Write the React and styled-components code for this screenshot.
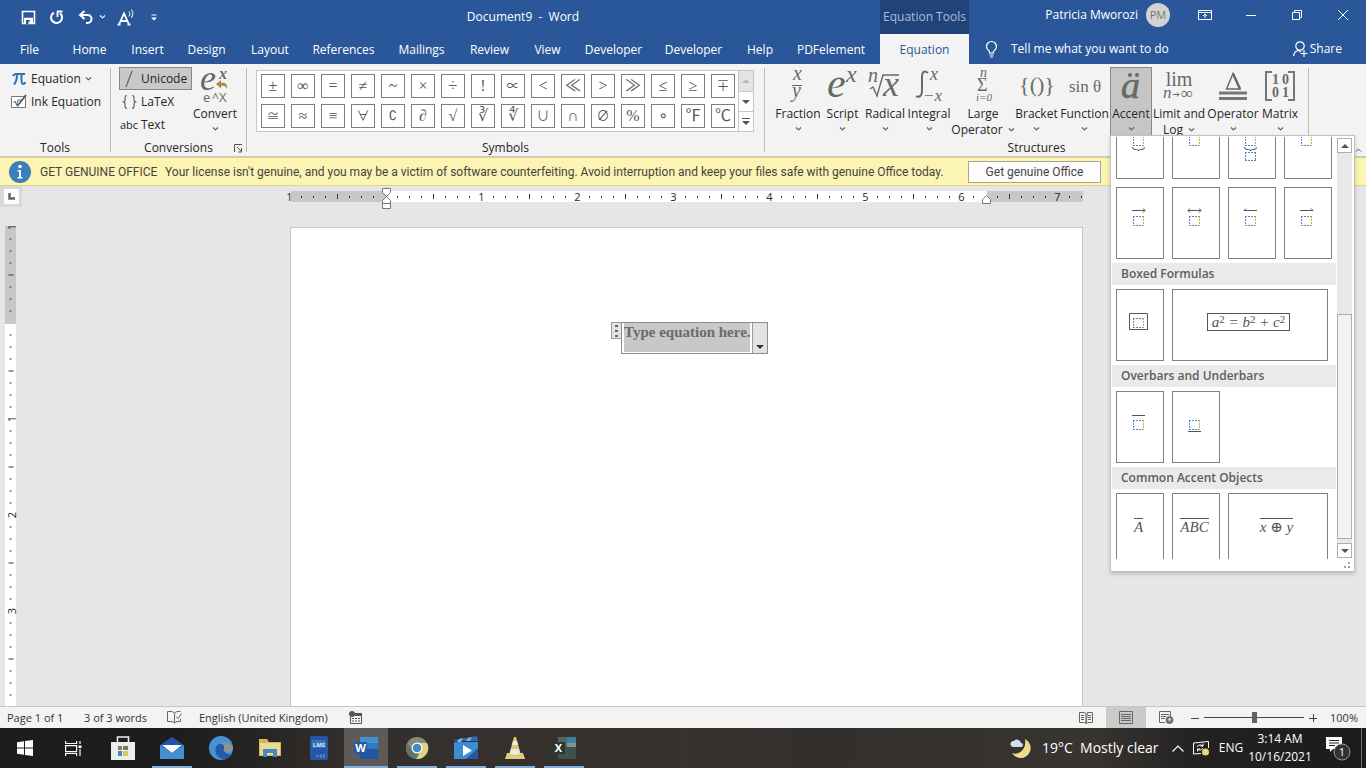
import React, { useState } from 'react'
import styled, { createGlobalStyle, css } from 'styled-components';

const GlobalStyle = createGlobalStyle`
  * { box-sizing: border-box; }
  body {
    margin: 0;
    overflow: hidden;
    font-family: "Open Sans", "Noto Sans", sans-serif;
    font-size: 12px;
    line-height: 16px;
    color: #262626;
  }
  button, input {
    font: inherit;
    color: inherit;
    background: none;
    border: 0;
    padding: 0;
    margin: 0;
  }
  svg { display: block; flex: none; overflow: visible; }
`

const MATH = '"Liberation Serif", "DejaVu Serif", serif';

const Window = styled.div`
  display: flex;
  flex-direction: column;
  height: 100vh;
`

/* ---------- title bar and tabs ---------- */

const TitleBar = styled.header`
  display: flex;
  height: 34px;
  flex: none;
  background: #2a579a;
  color: #fff;
`

const QuickAccess = styled.div`
  display: flex;
  align-items: center;
  width: 166px;
  padding-left: 21px;
`

const QuickButton = styled.button`
  display: flex;
  justify-content: center;
  width: ${p => p.$width || 28}px;
`

const DocTitle = styled.h1`
  flex: 1;
  margin: 0;
  font-size: 12px;
  font-weight: 400;
  line-height: 34px;
  text-align: center;
  white-space: pre;
`

const ContextTitle = styled.div`
  width: 89px;
  background: #204478;
  color: #a9bcd8;
  line-height: 33px;
  text-align: center;
  white-space: nowrap;
`

const TitleRight = styled.div`
  display: flex;
  align-items: center;
  justify-content: flex-end;
  width: 397px;
  padding-bottom: 4px;
`

const Avatar = styled.span`
  width: 24px;
  height: 24px;
  margin: 0 12px 0 8px;
  border-radius: 50%;
  background: #d2d2d2;
  color: #77787a;
  font-size: 11px;
  line-height: 24px;
  text-align: center;
`

const WindowButton = styled.button`
  display: flex;
  align-items: center;
  justify-content: center;
  width: 46px;
  height: 30px;
`

const TabBar = styled.nav`
  display: flex;
  height: 30px;
  flex: none;
  background: #2a579a;
  color: #fff;
`

const Tabs = styled.div`
  display: flex;
  flex: 1;
`

const Tab = styled.button`
  width: ${p => p.$width}px;
  height: 30px;
  padding-top: 2px;
  text-align: center;
  white-space: nowrap;
  ${p => p.$active && css`
    background: #f3f3f3;
    color: #2a579a;
  `}
`

const TabRight = styled.div`
  display: flex;
  align-items: center;
  justify-content: space-between;
  width: 397px;
  padding: 0 24px 0 16px;
`

const IconTextButton = styled.button`
  display: flex;
  align-items: center;
  gap: ${p => p.$gap}px;
  white-space: nowrap;
`

/* ---------- ribbon ---------- */

const Ribbon = styled.section`
  display: flex;
  height: 93px;
  flex: none;
  background: #f3f3f3;
  border-bottom: 1px solid #c8c8c8;
`

const Group = styled.div`
  display: flex;
  flex-direction: column;
  width: ${p => p.$width}px;
  padding-top: 3px;
`

const GroupBody = styled.div`
  display: flex;
  height: 72px;
  flex: none;
  padding-left: ${p => p.$left || 0}px;
`

const GroupLabel = styled.div`
  position: relative;
  padding-top: 1px;
  text-align: center;
`

const Launcher = styled.button`
  position: absolute;
  right: 3px;
  top: 5px;
`

const Separator = styled.div`
  width: 1px;
  margin: 4px 0;
  background: #c2bbb0;
`

const SmallColumn = styled.div`
  width: ${p => p.$width}px;
`

const SmallButton = styled.button`
  display: flex;
  align-items: center;
  gap: 4px;
  width: 100%;
  height: 23px;
  padding-left: 1px;
  white-space: nowrap;
  border: 1px solid ${p => (p.$active ? '#888' : 'transparent')};
  background: ${p => (p.$active ? '#c8c8c8' : 'none')};
`

const IconSlot = styled.span`
  display: flex;
  justify-content: center;
  width: 16px;
  font-size: 11px;
`

const BigWrap = styled.div`
  position: relative;
  width: ${p => p.$width}px;
`

const BigButton = styled.button`
  display: flex;
  flex-direction: column;
  align-items: center;
  width: 100%;
  height: 70px;
  border: 1px solid ${p => (p.$active ? '#8a8a8a' : 'transparent')};
  background: ${p => (p.$active ? '#c6c6c6' : 'none')};
`

const BigLabel = styled.span`
  display: flex;
  justify-content: center;
  align-items: center;
  gap: 5px;
  height: 16px;
  white-space: nowrap;
`

const Gallery = styled.div`
  display: flex;
  width: 498px;
  height: 62px;
  margin-top: 3px;
  border: 1px solid #c6c6c6;
  background: #fff;
`

const SymbolGrid = styled.div`
  display: grid;
  grid-template-columns: repeat(16, 24px);
  grid-auto-rows: 24px;
  gap: 6px;
  padding: 3px 0 0 4px;
  flex: 1;
`

const SymbolButton = styled.button`
  border: 1px solid #7d7d7d;
  background: #fff;
  color: #555a55;
  font-family: "Liberation Serif", "Noto Sans CJK JP", "DejaVu Sans", serif;
  font-size: ${p => (p.$wide ? 13 : 16)}px;
  line-height: 20px;
`

const GallerySpin = styled.div`
  display: grid;
  grid-template-rows: 20px 20px 20px;
  width: 15px;
  border-left: 1px solid #c6c6c6;
`

const SpinButton = styled.button`
  display: flex;
  align-items: center;
  justify-content: center;
  background: ${p => (p.disabled ? '#e4e4e4' : '#fff')};
  & + & { border-top: 1px solid #c6c6c6; }
`

const CollapseButton = styled.button`
  display: flex;
  align-items: flex-end;
  margin-left: auto;
  padding: 0 4px 4px 0;
`

/* ---------- accent menu ---------- */

const Menu = styled.div`
  position: absolute;
  z-index: 5;
  top: 100%;
  left: 0;
  margin-top: -4px;
  width: 245px;
  height: 437px;
  display: flex;
  flex-direction: column;
  border: 1px solid #c3c3c3;
  background: #fff;
  box-shadow: 0 2px 4px rgba(0, 0, 0, 0.2);
`

const MenuBody = styled.div`
  display: flex;
  height: 424px;
  padding: 1px 2px 0 1px;
`

const MenuList = styled.div`
  width: 225px;
  height: 422px;
  overflow: hidden;
`

const MenuRow = styled.div`
  display: flex;
  gap: 8px;
  padding: 4px;
  &:first-child { margin-top: -34px; }
`

const MenuHeading = styled.h2`
  width: 224px;
  margin: 0;
  padding-left: 9px;
  background: #eaeaea;
  color: #5a5f5b;
  font-size: 12px;
  font-weight: 600;
  line-height: 22px;
`

const MenuCell = styled.button`
  display: flex;
  align-items: center;
  justify-content: center;
  flex: none;
  width: ${p => p.$width || 48}px;
  height: 72px;
  border: 1px solid #7f7f7f;
  background: #fff;
  color: #55564c;
  font-family: ${MATH};
  font-style: italic;
  font-size: 15px;
`

const BoxedFormula = styled.span`
  height: 18px;
  padding: 0 4px;
  margin: 0 3px 6px 0;
  border: 1px solid #555;
  line-height: 17px;
  white-space: nowrap;
  sup {
    font-size: 11px;
    font-style: normal;
    line-height: 0;
    vertical-align: 4px;
  }
`

const Overlined = styled.span`
  border-top: 1px solid #555;
  line-height: 16px;
  margin: 0 3px 6px 0;
  white-space: nowrap;
`

const ScrollTrack = styled.div`
  display: flex;
  flex-direction: column;
  align-items: center;
  width: 15px;
  height: 420px;
  margin-top: 1px;
  background: #e8e8e8;
`

const ScrollButton = styled.button`
  display: flex;
  align-items: center;
  justify-content: center;
  width: 15px;
  height: 15px;
  border: 1px solid #b5ada5;
  background: #fff;
`

const ScrollThumb = styled.div`
  width: 15px;
  height: 225px;
  margin: auto 0 4px;
  border: 1px solid #b5ada5;
  background: #f2f2f2;
`

const MenuFooter = styled.div`
  display: flex;
  justify-content: flex-end;
  padding: 2px 4px 0 0;
`

/* ---------- licence bar ---------- */

const LicenseBar = styled.div`
  display: flex;
  align-items: center;
  height: 29px;
  flex: none;
  padding-left: 9px;
  background: #fcf4b2;
  border: solid #dfd389;
  border-width: 1px 0;
  color: #444;
  font-family: Roboto, sans-serif;
  white-space: nowrap;
`

const LicenseTitle = styled.strong`
  width: 125px;
  margin-left: 9px;
  font-weight: 400;
`

const LicenseText = styled.span`
  width: 803px;
`

const LicenseButton = styled.button`
  width: 133px;
  height: 22px;
  border: 1px solid #aaa394;
  background: #fdfdfd;
`

/* ---------- document ---------- */

const Workspace = styled.main`
  display: flex;
  flex: 1;
  min-height: 0;
  overflow: hidden;
  background: #e6e6e6;
`

const LeftColumn = styled.div`
  display: flex;
  flex-direction: column;
  width: 22px;
  flex: none;
`

const TabStop = styled.button`
  display: flex;
  align-items: center;
  justify-content: center;
  width: 22px;
  height: 21px;
  flex: none;
  border: 3px solid #dadada;
  border-left-width: 4px;
  background: #fdfdfd;
`

const VerticalRuler = styled.div`
  display: flex;
  flex: 1;
  min-height: 0;
  width: 11px;
  margin: 19px 0 0 5px;
  background: linear-gradient(#c8c8c8 98px, #fff 98px);
`

const HorizontalRuler = styled.div`
  position: relative;
  width: 792px;
  height: 11px;
  margin-top: 5px;
  background: linear-gradient(90deg, #c8c8c8 95px, #fff 95px 696px, #c8c8c8 696px);
`

const Ticks = styled.div`
  display: flex;
  flex-direction: ${p => (p.$vertical ? 'column' : 'row')};
  margin: ${p => (p.$vertical ? '-5px 0 0' : '0 0 0 -7px')};
`

const Tick = styled.span`
  display: flex;
  flex: none;
  align-items: center;
  justify-content: center;
  width: ${p => (p.$vertical ? 11 : 12)}px;
  height: ${p => (p.$vertical ? 12 : 11)}px;
  font-size: 11px;
  line-height: 11px;
  ${p => p.$vertical && 'transform: rotate(-90deg);'}
  ${p => p.$mark && css`
    &::before {
      content: "";
      width: 1px;
      height: ${p.$mark}px;
      background: #333;
    }
  `}
`

const Marker = styled.svg`
  position: absolute;
  top: ${p => p.$top}px;
  left: ${p => p.$left}px;
`

const Canvas = styled.div`
  display: flex;
  flex: 1;
  flex-direction: column;
  align-items: center;
  padding-right: 15px;
`

const Page = styled.div`
  display: flex;
  flex: 1;
  align-items: flex-start;
  justify-content: center;
  width: 793px;
  margin-top: 25px;
  padding: 94px 0 0 6px;
  border: solid #c6c6c6;
  border-width: 1px 1px 0;
  background: #fff;
`

const EquationHandle = styled.span`
  display: flex;
  align-items: center;
  justify-content: center;
  width: 10px;
  height: 17px;
  border: 1px solid #a09a94;
  border-right: 0;
  background: #e3e3e3;
`

const EquationFrame = styled.div`
  display: flex;
  height: 32px;
  border: 1px solid #928b85;
`

const EquationText = styled.span`
  width: 126px;
  margin: 0 2px 1px;
  background: #c8c8c8;
  color: #6b6b69;
  font-family: ${MATH};
  font-size: 15px;
  font-weight: 700;
  line-height: 19px;
  text-align: center;
  white-space: nowrap;
`

const EquationMenu = styled.button`
  display: flex;
  align-items: flex-end;
  justify-content: center;
  width: 15px;
  padding-bottom: 4px;
  border-left: 1px solid #a09a94;
  background: #e3e3e3;
`

/* ---------- status bar ---------- */

const StatusBar = styled.footer`
  display: flex;
  align-items: center;
  height: 22px;
  flex: none;
  padding: 0 8px 0 7px;
  background: #f3f3f3;
  border-top: 1px solid #c6c6c6;
  font-size: 11px;
  color: #333;
`

const StatusItem = styled.button`
  display: flex;
  align-items: center;
  width: ${p => p.$width}px;
  height: 21px;
  white-space: nowrap;
`

const ViewButton = styled.button`
  display: flex;
  align-items: center;
  justify-content: center;
  width: 40px;
  height: 21px;
  background: ${p => (p.$active ? '#cacaca' : 'none')};
`

const ZoomButton = styled.button`
  display: flex;
  justify-content: center;
  width: 18px;
`

const ZoomSlider = styled.input`
  appearance: none;
  width: 100px;
  height: 12px;
  background: linear-gradient(#444, #444) center / 100% 1px no-repeat;
  &::-webkit-slider-thumb {
    appearance: none;
    width: 5px;
    height: 11px;
    background: #5f625f;
  }
`

const ZoomValue = styled.span`
  width: 36px;
  text-align: right;
`

/* ---------- taskbar ---------- */

const Taskbar = styled.div`
  display: flex;
  height: 40px;
  flex: none;
  background: linear-gradient(90deg, #1d1d1d 0, #1d1d1d 13%, #332f2c 26%, #38322e 50%, #332f2c 60%, #38342f 80%, #222 88%, #1b1b1b 100%);
  color: #fff;
`

const TaskButton = styled.button`
  display: flex;
  align-items: center;
  justify-content: center;
  width: 49px;
  height: 40px;
  border: solid transparent;
  border-width: 0 2px;
  ${p => p.$running && css`
    border-width: 0 4px 0 5px;
    background: linear-gradient(#84aede, #84aede) bottom / 100% 2px no-repeat padding-box;
  `}
  ${p => p.$active && css`
    border-width: 0 4px 0 1px;
    background: linear-gradient(#84aede, #84aede) bottom / 100% 2px no-repeat padding-box, #5e5a57 padding-box;
  `}
`

const Tray = styled.div`
  display: flex;
  align-items: center;
  margin-left: auto;
`

const Weather = styled.button`
  display: flex;
  align-items: center;
  width: 160px;
  font-size: 14px;
  white-space: pre;
  svg { margin-right: 10px; }
`

const TrayButton = styled.button`
  display: flex;
  justify-content: center;
  width: ${p => p.$width}px;
`

const Clock = styled.button`
  width: 72px;
  line-height: 18px;
  text-align: center;
`

const ShowDesktop = styled.button`
  width: 5px;
  height: 40px;
  border-left: 1px solid #6d6d6d;
`

/* ---------- icons ---------- */

const Chevron = ({ color = '#555' }) => (
  <svg width="7" height="4" viewBox="0 0 7 4"><path d="M1 .5l2.500 2.300L6 .5" fill="none" stroke={color} strokeWidth="1.100" /></svg>
)

const Triangle = ({ up, color = '#555' }) => (
  <svg width="8" height="4" viewBox="0 0 8 4"><path d={up ? 'M0 4h8L4 0z' : 'M0 0h8L4 4z'} fill={color} /></svg>
)

const SaveIcon = () => (
  <svg width="15" height="15" viewBox="0 0 15 15"><path d="M1.500 1.500h12v12h-12zM3 8.500h9" fill="none" stroke="#fff" strokeWidth="1.600" /><path d="M3 8h9v6H3z" fill="#fff" /><path d="M5 10h4v4H5z" fill="#2a579a" /><path d="M7.500 11.500h1.500v2.500H7.500z" fill="#fff" /></svg>
)

const RedoIcon = () => (
  <svg width="15" height="15" viewBox="0 0 15 15"><path d="M5 2.600A5.500 5.500 0 1 0 11 3.200" fill="none" stroke="#fff" strokeWidth="2" /><path d="M8 1.500h5.500M8.500 1v6" stroke="#fff" strokeWidth="1.800" /></svg>
)

const UndoIcon = () => (
  <svg width="16" height="15" viewBox="0 0 16 15"><path d="M2 5h7.500a4 4 0 0 1 0 8H8" fill="none" stroke="#fff" strokeWidth="2" /><path d="M6.500 1L2 5l4.500 4" fill="none" stroke="#fff" strokeWidth="2" /></svg>
)

const ReadAloudIcon = () => (
  <svg width="18" height="18" viewBox="0 0 18 18"><path d="M2 16.500L7 5.500 12 16.500M3.500 13h7M.5 16.500h3M10.500 16.500h3" fill="none" stroke="#fff" strokeWidth="1.800" /><path d="M12 3.500q2 2 0 5M14.500 1.500q3 3.500 0 8.500" fill="none" stroke="#fff" /></svg>
)

const CustomizeIcon = () => (
  <svg width="6" height="7" viewBox="0 0 6 7"><path d="M.500 1h5" stroke="#fff" /><path d="M0 3.500h6L3 6.500z" fill="#fff" /></svg>
)

const RibbonOptionsIcon = () => (
  <svg width="14" height="12" viewBox="0 0 14 12"><path d="M.500 1.500h13v9H.500zM.500 3.500h13M7 9V5M5 7l2-2 2 2" fill="none" stroke="#fff" /></svg>
)

const BulbIcon = () => (
  <svg width="13" height="17" viewBox="0 0 13 17"><path d="M4.500 12v-1.500C3 9 1.500 8 1.500 5.500a5 5 0 0 1 10 0C11.500 8 10 9 8.500 10.500V12zM4.500 14h4M5 16h3" fill="none" stroke="#fff" strokeWidth="1.200" /></svg>
)

const ShareIcon = () => (
  <svg width="15" height="16" viewBox="0 0 15 16"><circle cx="7" cy="5" r="4.200" fill="none" stroke="#fff" strokeWidth="1.200" /><path d="M.600 15C1 11.500 3 9.800 5.500 9.500L8 11M11 9v7M7.500 12.500h7" fill="none" stroke="#fff" strokeWidth="1.200" /></svg>
)

const InkIcon = () => (
  <svg width="16" height="14" viewBox="0 0 16 14"><path d="M.500 1.500h14v11H.500z" fill="#fff" stroke="#777" /><path d="M2.500 8l1.500-2 1.500 4L7 5h3.500" fill="none" stroke="#2e75b6" /><path d="M15 0L7.500 9.500l-1.500 1.500" fill="none" stroke="#555" strokeWidth="1.800" /></svg>
)

const LauncherIcon = () => (
  <svg width="9" height="9" viewBox="0 0 9 9"><path d="M.500 8V.500H8M3 3l4.500 4.500M7.500 4v4H4" fill="none" stroke="#555" /></svg>
)

const Glyph = ({ width, children }) => (
  <svg width={width} height="38" viewBox={`0 0 ${width} 38`} fontFamily="Liberation Serif, serif" fontStyle="italic" fill="#666b66">{children}</svg>
)

const glyphs = {
  Convert: (
    <Glyph width={32}>
      <text x="1" y="22" fontSize="36">e</text>
      <text x="20" y="11" fontSize="16" fontWeight="700">x</text>
      <path d="M17 16l5-4v3c4-1 7 1 6 6-1-3-3-3.500-6-3v2.500z" fill="#a98f45" />
      <text x="4" y="34" fontSize="13" fontStyle="normal" fontFamily="Open Sans">e</text>
      <text x="13" y="34" fontSize="12" fontStyle="normal" fontFamily="Open Sans">^</text>
      <text x="20" y="34" fontSize="13" fontStyle="normal" fontFamily="Open Sans">X</text>
    </Glyph>
  ),
  Fraction: (
    <Glyph width={20}>
      <text x="5" y="12" fontSize="20">x</text>
      <path d="M4 17.500h10" stroke="#666b66" />
      <text x="4" y="29" fontSize="20">y</text>
    </Glyph>
  ),
  Script: (
    <Glyph width={32}>
      <text x="0" y="29" fontSize="42">e</text>
      <text x="19" y="14" fontSize="24">x</text>
    </Glyph>
  ),
  Radical: (
    <Glyph width={34}>
      <text x="0" y="14" fontSize="20">n</text>
      <path d="M2 21l3-2 4 9 6-21h16" fill="none" stroke="#666b66" strokeWidth="1.400" />
      <text x="15" y="28" fontSize="36">x</text>
    </Glyph>
  ),
  Integral: (
    <Glyph width={28}>
      <path d="M1 28c3 2 6 0 6-5V9c0-5 2-7 6-4" fill="none" stroke="#666b66" strokeWidth="2" />
      <text x="15" y="12" fontSize="18">x</text>
      <text x="8" y="33" fontSize="17">−x</text>
    </Glyph>
  ),
  Large: (
    <Glyph width={20}>
      <text x="7" y="9" fontSize="14">n</text>
      <text x="4" y="23" fontSize="18" fontStyle="normal">Σ</text>
      <text x="3" y="33" fontSize="11">i=0</text>
    </Glyph>
  ),
  Bracket: (
    <Glyph width={34}>
      <text x="17" y="24" fontSize="22" fontStyle="normal" textAnchor="middle">{'{()}'}</text>
    </Glyph>
  ),
  Function: (
    <Glyph width={34}>
      <text x="17" y="24" fontSize="17" fontStyle="normal" textAnchor="middle">sin θ</text>
    </Glyph>
  ),
  Accent: (
    <Glyph width={24}>
      <text x="2" y="30" fontSize="38" stroke="#666b66" strokeWidth=".6">a</text>
      <circle cx="11" cy="7" r="2" /><circle cx="18" cy="7" r="2" />
    </Glyph>
  ),
  Limit: (
    <Glyph width={32}>
      <text x="16" y="18" fontSize="20" fontStyle="normal" textAnchor="middle">lim</text>
      <text x="0" y="30" fontSize="17">n</text>
      <path d="M10 26.500h6M14 24.500l2 2-2 2" fill="none" stroke="#666b66" />
      <text x="18" y="31" fontSize="17" fontStyle="normal">∞</text>
    </Glyph>
  ),
  Operator: (
    <Glyph width={30}>
      <path d="M8.500 21L15 5.500l7 15.500z" fill="none" stroke="#666b66" strokeWidth="1.400" /><path d="M15 5.500L22 21" stroke="#666b66" strokeWidth="2.400" />
      <path d="M1 25h28M1 30.500h28" stroke="#777" strokeWidth="3" />
    </Glyph>
  ),
  Matrix: (
    <Glyph width={32}>
      <path d="M8 4H2v28h6M24 4h6v28h-6" fill="none" stroke="#777" strokeWidth="2" />
      <text x="8" y="16" fontSize="14" fontStyle="normal" fontWeight="700">1</text>
      <text x="18" y="16" fontSize="14" fontStyle="normal" fontWeight="700">0</text>
      <text x="8" y="29" fontSize="14" fontStyle="normal" fontWeight="700">0</text>
      <text x="18" y="29" fontSize="14" fontStyle="normal" fontWeight="700">1</text>
    </Glyph>
  ),
}

// dotted slot with a mark above or below it
const Slot = ({ mark, second }) => (
  <svg width="46" height="70" viewBox="0 0 46 70" fill="none" stroke="#555">
    <g strokeDasharray="2 1" shapeRendering="crispEdges">
      <path d="M16 28.500h11M16 37.500h11M16.500 28v10" stroke="#4a8ac8" />
      <path d="M26.500 28v10" stroke="#c9a93c" />
      {second && <path d="M16 44.500h11M16 52.500h11M16.500 44v9M26.500 44v9" stroke="#4a8ac8" />}
    </g>
    <path d={mark} />
  </svg>
)

const marks = {
  brace: 'M15.500 39q0 2.500 2.500 2.500h1.500q1.500 0 2 1.500.500-1.500 2-1.500H25q2.500 0 2.500-2.500',
  right: 'M15 22.500h13M26 20.500l2 2-2 2',
  both: 'M15 22.500h13M26 20.500l2 2-2 2M17 20.500l-2 2 2 2',
  leftHarpoon: 'M15 22.500h13M17 20.500l-2 2',
  rightHarpoon: 'M15 22.500h13M26 20.500l2 2',
  box: 'M12.500 23.500h18v16h-18z',
  over: 'M15 23.500h13',
  under: 'M15 39.500h13',
}

const tabs = [
  ['File', 59], ['Home', 61], ['Insert', 55], ['Design', 63], ['Layout', 64], ['References', 83],
  ['Mailings', 73], ['Review', 63], ['View', 53], ['Developer', 79], ['Developer', 81], ['Help', 52], ['PDFelement', 90],
]

const symbols = [...'±∞=≠~×÷!∝<≪>≫≤≥∓≅≈≡∀∁∂√∛∜∪∩∅%∘℉℃'];
const wideSymbols = '∝∓≅∀∁∪∅';

const structures = [
  { label: 'Fraction', width: 46 },
  { label: 'Script', width: 43 },
  { label: 'Radical', width: 42 },
  { label: 'Integral', width: 46 },
  { label: 'Large', second: 'Operator', width: 62 },
  { label: 'Bracket', width: 45 },
  { label: 'Function', width: 51 },
  { label: 'Accent', width: 42 },
  { label: 'Limit and', second: 'Log', glyph: 'Limit', width: 54 },
  { label: 'Operator', width: 54 },
  { label: 'Matrix', width: 40 },
]

const RulerTicks = ({ count, vertical }) => (
  <Ticks $vertical={vertical}>
    {Array.from({ length: count }, (_, i) => {
      const inch = Math.abs(i / 8 - 1);
      if (i === 8) return <Tick key={i} $vertical={vertical} />
      if (i % 8 === 0) return <Tick key={i} $vertical={vertical}>{inch}</Tick>
      return <Tick key={i} $vertical={vertical} $mark={i % 8 === 4 ? 5 : 2} />
    })}
  </Ticks>
)

const AccentMenu = () => (
  <Menu>
    <MenuBody>
      <MenuList>
        <MenuRow>
          <MenuCell aria-label="Brace below"><Slot mark={marks.brace} /></MenuCell>
          <MenuCell aria-label="Bar accent"><Slot /></MenuCell>
          <MenuCell aria-label="Brace with text"><Slot mark={marks.brace} second /></MenuCell>
          <MenuCell aria-label="Arc accent"><Slot /></MenuCell>
        </MenuRow>
        <MenuRow>
          <MenuCell aria-label="Right arrow"><Slot mark={marks.right} /></MenuCell>
          <MenuCell aria-label="Both arrows"><Slot mark={marks.both} /></MenuCell>
          <MenuCell aria-label="Left harpoon"><Slot mark={marks.leftHarpoon} /></MenuCell>
          <MenuCell aria-label="Right harpoon"><Slot mark={marks.rightHarpoon} /></MenuCell>
        </MenuRow>
        <MenuHeading>Boxed Formulas</MenuHeading>
        <MenuRow>
          <MenuCell aria-label="Box"><Slot mark={marks.box} /></MenuCell>
          <MenuCell $width={156}>
            <BoxedFormula>a<sup>2</sup> = b<sup>2</sup> + c<sup>2</sup></BoxedFormula>
          </MenuCell>
        </MenuRow>
        <MenuHeading>Overbars and Underbars</MenuHeading>
        <MenuRow>
          <MenuCell aria-label="Overbar"><Slot mark={marks.over} /></MenuCell>
          <MenuCell aria-label="Underbar"><Slot mark={marks.under} /></MenuCell>
        </MenuRow>
        <MenuHeading>Common Accent Objects</MenuHeading>
        <MenuRow>
          <MenuCell><Overlined>A</Overlined></MenuCell>
          <MenuCell><Overlined>ABC</Overlined></MenuCell>
          <MenuCell $width={100}><Overlined>x ⊕ y</Overlined></MenuCell>
        </MenuRow>
      </MenuList>
      <ScrollTrack>
        <ScrollButton aria-label="Scroll up"><Triangle up /></ScrollButton>
        <ScrollThumb />
        <ScrollButton aria-label="Scroll down"><Triangle /></ScrollButton>
      </ScrollTrack>
    </MenuBody>
    <MenuFooter>
      <svg width="8" height="7" viewBox="0 0 8 7" fill="#a8a29c"><path d="M6 0h2v2H6zM6 4h2v2H6zM2 4h2v2H2z" /></svg>
    </MenuFooter>
  </Menu>
)

const taskApps = [
  { name: 'Microsoft Store', icon: (
    <svg width="24" height="26" viewBox="0 0 24 26"><path d="M6.500 8V2h11v6" fill="none" stroke="#eee" strokeWidth="1.600" /><path d="M0 7h24v18H0z" fill="#eee" /><path d="M7 11h4v4H7z" fill="#8a7a62" /><path d="M12 11h5v4h-5z" fill="#6f7f5c" /><path d="M7 16h4v5H7z" fill="#3f8bc9" /><path d="M12 16h5v5h-5z" fill="#d9c765" /></svg>
  ) },
  { name: 'Mail', running: true, icon: (
    <svg width="24" height="24" viewBox="0 0 24 24"><path d="M0 9L12 1l12 8v14H0z" fill="#2455a5" /><path d="M2 9h20L12 17z" fill="#fff" /><path d="M0 9l12 8 12-8v14H0z" fill="#438fd0" /></svg>
  ) },
  { name: 'Edge', icon: (
    <svg width="24" height="24" viewBox="0 0 24 24"><circle cx="12" cy="12" r="12" fill="#4593d4" /><path d="M15 15c-1-1 1-2 0-5-1-3-6-3-8 1-2 5 1 10 6 12 4 1 8-1 10-5-3 1-6 0-8-3z" fill="#2459a7" /><path d="M15 15c-1-1 1-2 0-4 0-2-1-3-3-3 3-3 10-1 12 4 0 4-5 5-9 3z" fill="#8a9690" /></svg>
  ) },
  { name: 'File Explorer', icon: (
    <svg width="22" height="20" viewBox="0 0 22 20"><path d="M0 1h8l2 3h12v14H0z" fill="#d0b95c" /><path d="M1 5h20v12H1z" fill="#ecdc91" /><path d="M4 19v-8h14v8h-4v-4H8v4z" fill="#3f8bc9" /></svg>
  ) },
  { name: 'LMS', icon: (
    <svg width="18" height="24" viewBox="0 0 18 24"><rect width="18" height="24" rx="2" fill="#2458a6" /><path d="M2 4h14v8H2z" fill="#3573b9" /><text x="9" y="11" fontSize="6" fontWeight="700" fill="#dce8f6" textAnchor="middle">LMS</text><path d="M6 20h3M11 18v4M14 18v4" stroke="#79a8df" /></svg>
  ) },
  { name: 'Word', running: true, active: true, icon: (
    <svg width="24" height="24" viewBox="0 0 24 24"><path d="M6 1h18v11H6z" fill="#4390d0" /><path d="M6 12h18v11H6z" fill="#2455a0" /><path d="M6 7h18v6H6z" fill="#3579c0" /><path d="M0 6h13v12H0z" fill="#2458a6" /><text x="6.500" y="16" fontSize="11" fontWeight="700" fill="#fff" textAnchor="middle">W</text></svg>
  ) },
  { name: 'Chrome', running: true, icon: (
    <svg width="24" height="24" viewBox="0 0 24 24"><circle cx="12" cy="12" r="11" fill="#8a8a7c" /><path d="M12 7h10a11 11 0 0 1-11 16l5-9z" fill="#e2d283" /><path d="M2 7a11 11 0 0 0 9 16l4-7-7-2z" fill="#617267" /><circle cx="12" cy="12" r="5.500" fill="#fff" /><circle cx="12" cy="12" r="4.300" fill="#3f8bc9" /></svg>
  ) },
  { name: 'Movies', running: true, icon: (
    <svg width="24" height="24" viewBox="0 0 24 24"><path d="M0 4l23-4 1 5H0z" fill="#2d6bb3" /><path d="M5 3l4-1-2 4H3zM14 2l4-1-2 4h-4z" fill="#7cb4e4" /><path d="M0 6h24v17H0z" fill="#3f8bd0" /><path d="M24 12v11H12z" fill="#2458a6" /><path d="M9 9l9 5.500L9 20z" fill="#fff" /></svg>
  ) },
  { name: 'VLC', running: true, icon: (
    <svg width="20" height="24" viewBox="0 0 20 24"><path d="M2 17h16l2 6H0z" fill="#e0cf79" /><path d="M9 1h2l5 18q-6 3-12 0z" fill="#ddc76c" /><path d="M8 5h4l1 4H7zM6 13h8l1 5q-5 2-10 0z" fill="#e9e9e9" /></svg>
  ) },
  { name: 'Excel', running: true, icon: (
    <svg width="24" height="24" viewBox="0 0 24 24"><path d="M6 1h9v10H6z" fill="#54675f" /><path d="M15 1h9v6h-9z" fill="#3e80a3" /><path d="M15 7h9v5h-9z" fill="#7d988a" /><path d="M6 11h18v12H6z" fill="#40504a" /><path d="M0 6h13v12H0z" fill="#29392f" /><text x="6.500" y="16" fontSize="11" fontWeight="700" fill="#fff" textAnchor="middle">X</text></svg>
  ) },
]

export default function App() {
  const [input, setInput] = useState('Unicode');
  const [zoom, setZoom] = useState(50);

  return (
    <Window>
      <GlobalStyle />

      <TitleBar>
        <QuickAccess>
          <QuickButton $width={16} aria-label="Save"><SaveIcon /></QuickButton>
          <QuickButton $width={40} aria-label="Repeat"><RedoIcon /></QuickButton>
          <QuickButton $width={20} aria-label="Undo"><UndoIcon /></QuickButton>
          <QuickButton $width={14} aria-label="Undo list"><Chevron color="#fff" /></QuickButton>
          <QuickButton $width={34} aria-label="Read aloud"><ReadAloudIcon /></QuickButton>
          <QuickButton $width={24} aria-label="Customize"><CustomizeIcon /></QuickButton>
        </QuickAccess>
        <DocTitle>{'Document9  -  Word'}</DocTitle>
        <ContextTitle>Equation Tools</ContextTitle>
        <TitleRight>
          <span>Patricia Mworozi</span>
          <Avatar>PM</Avatar>
          <WindowButton aria-label="Ribbon options"><RibbonOptionsIcon /></WindowButton>
          <WindowButton aria-label="Minimize"><svg width="10" height="1"><path d="M0 .5h10" stroke="#fff" /></svg></WindowButton>
          <WindowButton aria-label="Restore">
            <svg width="10" height="10" viewBox="0 0 10 10"><path d="M.5 2.500h7v7h-7zM2.500 2.500v-2h7v7h-2" fill="none" stroke="#fff" /></svg>
          </WindowButton>
          <WindowButton aria-label="Close">
            <svg width="10" height="10" viewBox="0 0 10 10"><path d="M0 0l10 10M10 0L0 10" stroke="#fff" /></svg>
          </WindowButton>
        </TitleRight>
      </TitleBar>

      <TabBar>
        <Tabs>
          {tabs.map(([name, width], i) => <Tab key={i} $width={width}>{name}</Tab>)}
        </Tabs>
        <Tab $width={89} $active>Equation</Tab>
        <TabRight>
          <IconTextButton $gap={13}><BulbIcon />Tell me what you want to do</IconTextButton>
          <IconTextButton $gap={2}><ShareIcon />Share</IconTextButton>
        </TabRight>
      </TabBar>

      <Ribbon>
        <Group $width={110}>
          <GroupBody $left={9}>
            <SmallColumn $width={96}>
              <SmallButton>
                <IconSlot><svg width="14" height="14" viewBox="0 0 14 14"><path d="M1 4q1-2 3-2h9M5 2.500Q5 9 2 12.500M9.500 2.500Q9 12 11 12t2-2" fill="none" stroke="#2e75b6" strokeWidth="2" /></svg></IconSlot>
                Equation <Chevron />
              </SmallButton>
              <SmallButton><IconSlot><InkIcon /></IconSlot>Ink Equation</SmallButton>
            </SmallColumn>
          </GroupBody>
          <GroupLabel>Tools</GroupLabel>
        </Group>
        <Separator />
        <Group $width={135}>
          <GroupBody $left={8}>
            <SmallColumn $width={73}>
              <SmallButton $active={input === 'Unicode'} onClick={() => setInput('Unicode')}>
                <IconSlot><svg width="8" height="16"><path d="M7 0L1 16" stroke="#666" strokeWidth="1.300" /></svg></IconSlot>Unicode
              </SmallButton>
              <SmallButton $active={input === 'LaTeX'} onClick={() => setInput('LaTeX')}>
                <IconSlot><svg width="15" height="14" viewBox="0 0 15 14"><path d="M5 .5Q3 .5 3 3v2Q3 7 .5 7 3 7 3 9v2q0 2.500 2 2.500M10 .5q2 0 2 2.500v2q0 2 2.500 2Q12 7 12 9v2q0 2.500-2 2.500" fill="none" stroke="#666" strokeWidth="1.200" /></svg></IconSlot>LaTeX
              </SmallButton>
              <SmallButton $active={input === 'Text'} onClick={() => setInput('Text')}>
                <IconSlot>abc</IconSlot>Text
              </SmallButton>
            </SmallColumn>
            <BigWrap $width={46}>
              <BigButton>
                {glyphs.Convert}
                <BigLabel>Convert</BigLabel>
                <BigLabel><Chevron /></BigLabel>
              </BigButton>
            </BigWrap>
          </GroupBody>
          <GroupLabel>Conversions<Launcher aria-label="Conversion options"><LauncherIcon /></Launcher></GroupLabel>
        </Group>
        <Separator />
        <Group $width={517}>
          <GroupBody $left={9}>
            <Gallery>
              <SymbolGrid>
                {symbols.map(s => <SymbolButton key={s} $wide={wideSymbols.includes(s)}>{s}</SymbolButton>)}
              </SymbolGrid>
              <GallerySpin>
                <SpinButton disabled aria-label="Previous row"><Triangle up color="#bbb" /></SpinButton>
                <SpinButton aria-label="Next row"><Triangle /></SpinButton>
                <SpinButton aria-label="More symbols">
                  <svg width="8" height="7"><path d="M0 .5h8" stroke="#555" /><path d="M0 3h8L4 7z" fill="#555" /></svg>
                </SpinButton>
              </GallerySpin>
            </Gallery>
          </GroupBody>
          <GroupLabel>Symbols</GroupLabel>
        </Group>
        <Separator />
        <Group $width={543}>
          <GroupBody $left={10}>
            {structures.map(s => (
              <BigWrap key={s.label} $width={s.width}>
                <BigButton $active={s.label === 'Accent'}>
                  {glyphs[s.glyph || s.label]}
                  <BigLabel>{s.label}</BigLabel>
                  <BigLabel>{s.second}<Chevron /></BigLabel>
                </BigButton>
                {s.label === 'Accent' && <AccentMenu />}
              </BigWrap>
            ))}
          </GroupBody>
          <GroupLabel>Structures</GroupLabel>
        </Group>
        <Separator />
        <CollapseButton aria-label="Collapse ribbon">
          <svg width="7" height="4"><path d="M1 3.500L3.500 1 6 3.500" fill="none" stroke="#555" /></svg>
        </CollapseButton>
      </Ribbon>

      <LicenseBar>
        <svg width="22" height="22" viewBox="0 0 22 22"><circle cx="11" cy="11" r="11" fill="#3a7fbd" /><circle cx="11" cy="5.500" r="1.800" fill="#fff" /><path d="M8.500 9H12v7h1.500v1.500h-5V16H10v-5.500H8.500z" fill="#fff" /></svg>
        <LicenseTitle>GET GENUINE OFFICE</LicenseTitle>
        <LicenseText>Your license isn't genuine, and you may be a victim of software counterfeiting. Avoid interruption and keep your files safe with genuine Office today.</LicenseText>
        <LicenseButton>Get genuine Office</LicenseButton>
      </LicenseBar>

      <Workspace>
        <LeftColumn>
          <TabStop aria-label="Tab stop"><svg width="7" height="7"><path d="M1.500 0v5.500H7" fill="none" stroke="#666" strokeWidth="2.500" /></svg></TabStop>
          <VerticalRuler><RulerTicks count={40} vertical /></VerticalRuler>
        </LeftColumn>
        <Canvas>
          <HorizontalRuler>
            <RulerTicks count={67} />
            <Marker $top={-3} $left={91} width="9" height="22" viewBox="0 0 9 22" fill="#fff" stroke="#777"><path d="M.5.5h8v4l-4 4-4-4zM4.500 8.500l4 4v8h-8v-8zM.500 15.500h8" /></Marker>
            <Marker $top={4} $left={691} width="9" height="9" viewBox="0 0 9 9" fill="#fff" stroke="#777"><path d="M4.500 .5l4 4v4h-8v-4z" /></Marker>
          </HorizontalRuler>
          <Page>
            <EquationHandle><svg width="3" height="12" fill="#666"><path d="M0 0h3v2H0zM0 5h3v2H0zM0 10h3v2H0z" /></svg></EquationHandle>
            <EquationFrame>
              <EquationText>Type equation here.</EquationText>
              <EquationMenu aria-label="Equation options"><Triangle color="#333" /></EquationMenu>
            </EquationFrame>
          </Page>
        </Canvas>
      </Workspace>

      <StatusBar>
        <StatusItem $width={77}>Page 1 of 1</StatusItem>
        <StatusItem $width={83}>3 of 3 words</StatusItem>
        <StatusItem $width={32} aria-label="Proofing">
          <svg width="15" height="13" viewBox="0 0 15 13" fill="none" stroke="#666"><path d="M7.500 11.500V2Q6 .5 4 .5H.5v10H4q2 0 3.500 1.500Q9 10.500 11 10.500h2.500V8M7.500 2Q9 .5 11 .5h2.500M9 5.500l2 2 3.500-5" /></svg>
        </StatusItem>
        <StatusItem $width={150}>English (United Kingdom)</StatusItem>
        <StatusItem $width={14} aria-label="Macro recording">
          <svg width="13" height="13" viewBox="0 0 13 13"><path d="M1.500 6v6.500h11v-10H6" fill="none" stroke="#555" /><path d="M6 2h7v3H6z" fill="#555" /><path d="M3 7.500h8M3 10h8" stroke="#555" strokeDasharray="2 1" /><circle cx="3" cy="3" r="3" fill="#555" /></svg>
        </StatusItem>
        <Tray>
          <ViewButton aria-label="Read mode">
            <svg width="14" height="12" viewBox="0 0 14 12" fill="none" stroke="#666"><path d="M7 11.500V1.500L5.500.500h-5v10h5zL8.500.500h5v10h-5zM2 3.500h3M2 5.500h3M2 7.500h3M9 3.500h3M9 5.500h3M9 7.500h3" /></svg>
          </ViewButton>
          <ViewButton $active aria-label="Print layout">
            <svg width="14" height="13" viewBox="0 0 14 13" fill="none" stroke="#666"><path d="M.5.5h13v12H.5zM2 3.500h10M2 5.500h10M2 7.500h10M2 9.500h10" /></svg>
          </ViewButton>
          <ViewButton aria-label="Web layout">
            <svg width="15" height="13" viewBox="0 0 15 13" fill="none" stroke="#666"><path d="M6 11.500H.5V.5h11V5M2 3.500h8M2 5.500h5M2 7.500h4" /><circle cx="10.500" cy="9" r="3.500" fill="#777" /><path d="M9 8l2-1 1 2-2 1z" fill="#ddd" stroke="none" /></svg>
          </ViewButton>
          <ZoomButton aria-label="Zoom out"><svg width="8" height="8"><path d="M0 4.500h8" stroke="#444" /></svg></ZoomButton>
          <ZoomSlider type="range" aria-label="Zoom" value={zoom} onChange={e => setZoom(e.target.value)} />
          <ZoomButton aria-label="Zoom in"><svg width="8" height="8"><path d="M0 4.500h8M4.500 0v8" stroke="#444" /></svg></ZoomButton>
          <ZoomValue>100%</ZoomValue>
        </Tray>
      </StatusBar>

      <Taskbar>
        <TaskButton aria-label="Start">
          <svg width="16" height="16" viewBox="0 0 16 16" fill="#fff"><path d="M0 2.200L7 1.200v6.300H0zM8 1l8-1v7.500H8zM0 8.500h7v6.300l-7-1zM8 8.500h8V16l-8-1z" /></svg>
        </TaskButton>
        <TaskButton aria-label="Task view">
          <svg width="17" height="15" viewBox="0 0 17 15" fill="none" stroke="#fff" strokeWidth="1.200"><path d="M.6 0v2.500h11V0M.6 15v-2.500h11V15M.6 4.600h11v6H.6zM15 0v3M15 8v7" /><path d="M13.500 4.500h3v2.500h-3z" fill="#fff" stroke="none" /></svg>
        </TaskButton>
        {taskApps.map(app => (
          <TaskButton key={app.name} aria-label={app.name} $running={app.running} $active={app.active}>{app.icon}</TaskButton>
        ))}
        <Tray>
          <Weather>
            <svg width="21" height="20" viewBox="0 0 21 20"><path d="M14 1a10 10 0 1 1-13 14c7 3 15-4 13-14z" fill="#ecdc8e" /><path d="M2 9a3 3 0 0 1 1-6 4 4 0 0 1 7 2 2 2 0 0 1 0 4z" fill="#cfe0f1" /></svg>
            {'19°C  Mostly clear'}
          </Weather>
          <TrayButton $width={13} aria-label="Hidden icons"><svg width="12" height="7"><path d="M.5 6.500L6 1l5.500 5.500" fill="none" stroke="#fff" strokeWidth="1.200" /></svg></TrayButton>
          <TrayButton $width={34} aria-label="Sync">
            <svg width="17" height="16" viewBox="0 0 17 16" fill="none" stroke="#fff"><path d="M8 13.500l-7.500.500V3l15-1.500V8M4 7q1-2.500 4-2l2 1M10 3.500V6H7.500M10 8q-1 2.500-4 2L4.500 9M4.500 11.500V9H7" /><circle cx="12.500" cy="12" r="3.500" fill="#ecdc6e" stroke="none" /></svg>
          </TrayButton>
          <TrayButton $width={26}>ENG</TrayButton>
          <Clock>3:14 AM<br />10/16/2021</Clock>
          <TrayButton $width={45} aria-label="Notifications">
            <svg width="25" height="25" viewBox="0 0 25 25"><path d="M0 1h16v12H7l-3 3v-3H0z" fill="#fff" /><path d="M3 4.500h10M3 7h10M3 9.500h6" stroke="#222" /><circle cx="16" cy="16" r="8" fill="#333" stroke="#999" /><text x="16" y="20" fontSize="11" fill="#fff" textAnchor="middle">1</text></svg>
          </TrayButton>
          <ShowDesktop aria-label="Show desktop" />
        </Tray>
      </Taskbar>
    </Window>
  )
}
